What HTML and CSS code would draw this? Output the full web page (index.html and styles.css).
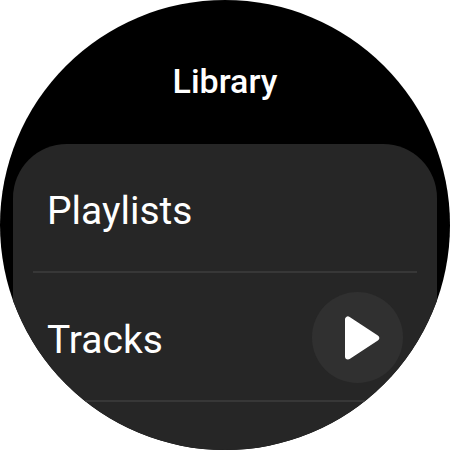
FILE: index.html
```html
<!DOCTYPE html>
<html lang="en">
<head>
    <meta charset="UTF-8">
    <meta name="viewport" content="width=device-width, initial-scale=1.0">
    <title>Library</title>
    <link rel="stylesheet" href="styles.css">
</head>
<body>
    <main class="watch">
        <h1 class="title">Library</h1>
        <ul class="list">
            <li class="row">
                <a class="link" href="#playlists">Playlists</a>
            </li>
            <li class="row">
                <a class="link" href="#tracks">Tracks</a>
                <button class="play" type="button" aria-label="Play tracks">
                    <svg class="icon" viewBox="0 0 47 47" aria-hidden="true">
                        <path d="M14 5.500v37L42.200 24z"/>
                    </svg>
                </button>
            </li>
            <li class="row"></li>
        </ul>
    </main>
</body>
</html>
```

FILE: styles.css
```css
* {
    box-sizing: border-box;
}
body {
    margin: 0;
    background: #fff;
    color: #fff;
    font-family: Roboto, sans-serif;
}
.watch {
    width: 100%;
    max-width: 100vh;
    aspect-ratio: 1;
    margin: 0 auto;
    padding: 0 13px;
    background: #000;
    clip-path: circle(50%);
    overflow: hidden;
}
.title {
    margin: 0;
    padding: 59px 0 41px;
    font-size: 34px;
    line-height: 44px;
    font-weight: 500;
    text-align: center;
}
.list {
    margin: 0;
    padding: 0 20px;
    list-style: none;
    background: #262626;
    border-radius: 54px 54px 0 0;
}
.row {
    display: flex;
    align-items: center;
    justify-content: space-between;
    height: 129px;
    padding: 2px 14px 0;
    border-bottom: 2px solid #373737;
}
.link {
    padding-top: 4px;
    color: inherit;
    font-size: 39px;
    line-height: 48px;
    text-decoration: none;
}
.play {
    display: flex;
    align-items: center;
    justify-content: center;
    width: 91px;
    height: 91px;
    padding: 0;
    border: 0;
    border-radius: 50%;
    background: #303030;
    color: #fff;
    cursor: pointer;
}
.icon {
    width: 47px;
    height: 47px;
    fill: currentColor;
    stroke: currentColor;
    stroke-width: 6;
    stroke-linejoin: round;
}
```
